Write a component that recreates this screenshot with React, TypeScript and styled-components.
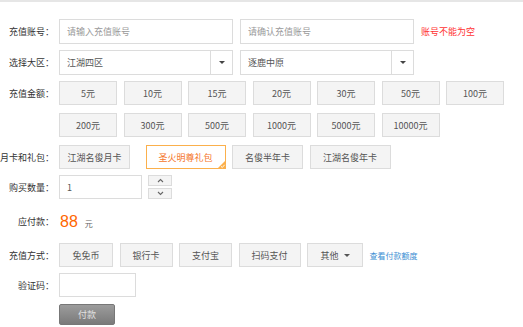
import React from "react";
import styled, { createGlobalStyle } from "styled-components";

const GlobalStyle = createGlobalStyle`
  html, body {
    margin: 0;
    padding: 0;
    background: #fff;
  }
  body {
    font-family: "Noto Sans CJK SC", "Liberation Sans", sans-serif;
    font-size: 9px;
    color: #333;
  }
`

const Page = styled.div`
  width: 523px;
  height: 327px;
  box-sizing: border-box;
  border-top: 2px solid #e6e6e6;
  padding-top: 17px;
  overflow: hidden;
`

const Form = styled.div`
  display: flex;
  flex-direction: column;
  gap: 6px;
`

const Row = styled.div<{ $mt?: number; $h?: number }>`
  display: flex;
  align-items: center;
  gap: 5px;
  margin-top: ${p => p.$mt || 0}px;
  min-height: ${p => p.$h || 24}px;
`

const Label = styled.div`
  width: 54px;
  flex-shrink: 0;
  display: flex;
  justify-content: flex-end;
  white-space: nowrap;
  color: #333;
  font-size: 9px;
`

const Field = styled.div`
  display: flex;
  align-items: center;
  gap: 7px;
`

const Input = styled.input<{ $w: number }>`
  box-sizing: border-box;
  width: ${p => p.$w}px;
  height: 25px;
  border: 1px solid #dcdcdc;
  background: #fff;
  padding: 0 0 0 7px;
  font-family: inherit;
  font-size: 9px;
  color: #555;
  outline: none;
  &::placeholder {
    color: #999;
  }
`

const Select = styled.div`
  box-sizing: border-box;
  width: 174px;
  height: 25px;
  border: 1px solid #dcdcdc;
  display: flex;
  align-items: stretch;
  color: #555;
`

const SelectText = styled.div`
  flex: 1;
  display: flex;
  align-items: center;
  padding-left: 7px;
`

const SelectArrow = styled.div`
  width: 21px;
  border-left: 1px solid #dcdcdc;
  display: flex;
  align-items: center;
  justify-content: center;
  &::after {
    content: "";
    border-left: 3px solid transparent;
    border-right: 3px solid transparent;
    border-top: 3px solid #444;
  }
`

const ErrorText = styled.span`
  color: #f33;
  font-size: 9px;
`

const AmountGrid = styled.div`
  display: grid;
  grid-template-columns: repeat(7, 58px);
  column-gap: 6.5px;
  row-gap: 8px;
`

const OptionButton = styled.div<{ $w?: number; $active?: boolean; $ml?: number }>`
  position: relative;
  box-sizing: border-box;
  width: ${p => (p.$w ? p.$w + "px" : "auto")};
  height: 24px;
  margin-left: ${p => p.$ml || 0}px;
  display: flex;
  align-items: center;
  justify-content: center;
  gap: 5px;
  background: ${p => (p.$active ? "#fff" : "#f4f4f4")};
  border: 1px solid ${p => (p.$active ? "#fbb04c" : "#dcdcdc")};
  color: ${p => (p.$active ? "#f5762a" : "#555")};
  font-size: 9px;
  white-space: nowrap;
`

const CornerCheck = styled.svg`
  position: absolute;
  right: -1px;
  bottom: -1px;
`

const ButtonRow = styled.div`
  display: flex;
  align-items: center;
  gap: 6.5px;
`

const Spinner = styled.div`
  display: flex;
  flex-direction: column;
  gap: 2px;
`

const SpinButton = styled.div`
  box-sizing: border-box;
  width: 24px;
  height: 11px;
  background: #f4f4f4;
  border: 1px solid #dcdcdc;
  display: flex;
  align-items: center;
  justify-content: center;
`

const Price = styled.span`
  color: #f60;
  font-family: "Liberation Sans", Arial, sans-serif;
  font-size: 16px;
  line-height: 16px;
  margin-left: 1px;
`

const Unit = styled.span`
  color: #666;
  font-size: 8px;
  margin-left: 7px;
`

const SmallArrow = styled.span`
  border-left: 3px solid transparent;
  border-right: 3px solid transparent;
  border-top: 3px solid #555;
`

const Link = styled.a`
  color: #3a8ed3;
  font-size: 8px;
  text-decoration: none;
  margin-left: 0px;
`

const PayButton = styled.div`
  box-sizing: border-box;
  width: 56px;
  height: 21px;
  border: 1px solid #777;
  border-radius: 2px;
  background: linear-gradient(#9c9c9c, #7a7a7a);
  color: #e0e0e0;
  display: flex;
  align-items: center;
  justify-content: center;
  font-size: 9px;
`

const amounts = ["5元", "10元", "15元", "20元", "30元", "50元", "100元", "200元", "300元", "500元", "1000元", "5000元", "10000元"]

const cards = [
    { name: "江湖名俊月卡", w: 71, ml: 0 },
    { name: "圣火明尊礼包", w: 80, ml: 9, active: true },
    { name: "名俊半年卡", w: 71, ml: 0 },
    { name: "江湖名俊年卡", w: 81, ml: 0 },
]

const payWays = [
    { name: "免免币", w: 54 },
    { name: "银行卡", w: 53 },
    { name: "支付宝", w: 53 },
    { name: "扫码支付", w: 62 },
]

const Chevron = (props: { up?: boolean }) => (
    <svg width="7" height="5" viewBox="0 0 7 5">
        <path
            d={props.up ? "M1 4 L3.5 1.5 L6 4" : "M1 1 L3.5 3.5 L6 1"}
            fill="none"
            stroke="#666"
            strokeWidth="1.1"
        />
    </svg>
)

const App = () => {
    return (
        <>
            <GlobalStyle/>
            <Page>
                <Form>
                    <Row $h={25}>
                        <Label>充值账号：</Label>
                        <Field>
                            <Input $w={174} placeholder="请输入充值账号"/>
                            <Input $w={174} placeholder="请确认充值账号"/>
                            <ErrorText>账号不能为空</ErrorText>
                        </Field>
                    </Row>
                    <Row $h={25}>
                        <Label>选择大区：</Label>
                        <Field>
                            <Select>
                                <SelectText>江湖四区</SelectText>
                                <SelectArrow/>
                            </Select>
                            <Select>
                                <SelectText>逐鹿中原</SelectText>
                                <SelectArrow/>
                            </Select>
                        </Field>
                    </Row>
                    <Row style={{alignItems: "flex-start"}}>
                        <Label style={{height: "24px", alignItems: "center"}}>充值金额：</Label>
                        <AmountGrid>
                            {amounts.map(a => (
                                <OptionButton key={a}>{a}</OptionButton>
                            ))}
                        </AmountGrid>
                    </Row>
                    <Row $mt={2}>
                        <Label>月卡和礼包：</Label>
                        <ButtonRow>
                            {cards.map(c => (
                                <OptionButton key={c.name} $w={c.w} $ml={c.ml} $active={c.active}>
                                    {c.name}
                                    {c.active && (
                                        <CornerCheck width="9" height="9" viewBox="0 0 9 9">
                                            <path d="M9 0 L9 9 L0 9 Z" fill="#fbb04c"/>
                                            <path d="M4 6.3 L5.3 7.5 L7.6 4.8" fill="none" stroke="#fff" strokeWidth="0.9"/>
                                        </CornerCheck>
                                    )}
                                </OptionButton>
                            ))}
                        </ButtonRow>
                    </Row>
                    <Row>
                        <Label>购买数量：</Label>
                        <Field style={{gap: "6px"}}>
                            <Input $w={83} defaultValue="1" style={{height: "24px"}}/>
                            <Spinner>
                                <SpinButton><Chevron up/></SpinButton>
                                <SpinButton><Chevron/></SpinButton>
                            </Spinner>
                        </Field>
                    </Row>
                    <Row $mt={4.5}>
                        <Label>应付款：</Label>
                        <div>
                            <Price>88</Price>
                            <Unit>元</Unit>
                        </div>
                    </Row>
                    <Row $mt={3.5}>
                        <Label>充值方式：</Label>
                        <ButtonRow>
                            {payWays.map(p => (
                                <OptionButton key={p.name} $w={p.w}>{p.name}</OptionButton>
                            ))}
                            <OptionButton $w={56}>其他 <SmallArrow/></OptionButton>
                            <Link href="#">查看付款额度</Link>
                        </ButtonRow>
                    </Row>
                    <Row>
                        <Label>验证码：</Label>
                        <Input $w={77} style={{height: "24px"}}/>
                    </Row>
                    <Row $mt={1} $h={21}>
                        <Label/>
                        <PayButton>付款</PayButton>
                    </Row>
                </Form>
            </Page>
        </>
    )
}

export default App
